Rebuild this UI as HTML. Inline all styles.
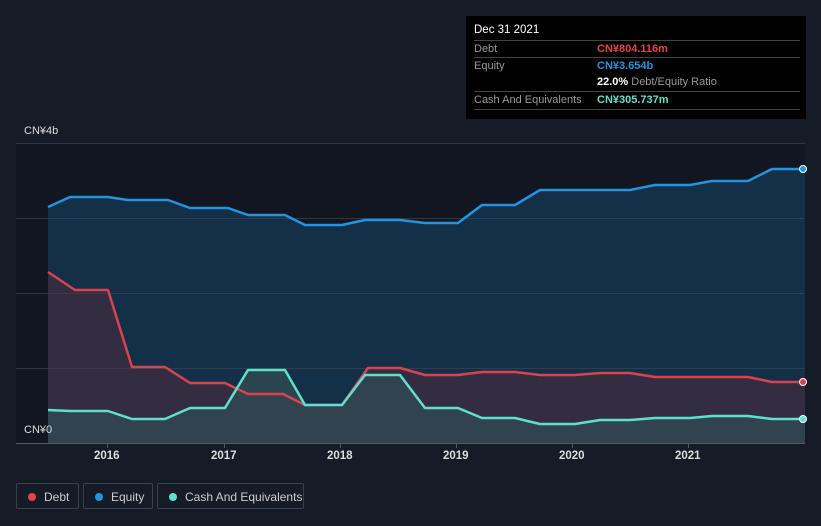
<!DOCTYPE html><html><head><style>
body{margin:0;width:821px;height:526px;background:#161c27;font-family:"Liberation Sans",sans-serif;overflow:hidden;position:relative}
.tt{position:absolute;left:466px;top:16px;width:340px;height:103px;background:#000;color:#ccc;font-size:11px}
.tt .r{position:absolute;left:8px;width:326px;border-top:1px solid #444;height:17px;line-height:17px;color:#999}
.tt b{position:absolute;left:123px;font-weight:bold}
.leg{position:absolute;top:483px;height:26px;border:1px solid #3a4049;border-radius:2px;color:#ccc;font-size:12px;line-height:26px;box-sizing:border-box}
.leg i{position:absolute;left:11px;top:9px;width:8px;height:8px;border-radius:50%}
.leg span{position:absolute;left:27px}
.ax{position:absolute;color:#ddd;font-size:11px}
.yr{position:absolute;color:#ddd;font-size:11.5px;font-weight:bold}
</style></head><body>
<svg width="821" height="526" style="position:absolute;left:0;top:0">
<rect x="16" y="143" width="789" height="300" fill="#111620"/>
<polygon fill="#143049" points="48,207 70,197 108,197 128,200 168,200 190,208 228,208 248,215 285,215 305,225 342,225 365,220 400,220 425,223 458,223 482,205 515,205 540,190 630,190 655,185 690,185 712,181 748,181 772,169 805,169 805,443 48,443"/>
<polygon fill="#3a2b3e" opacity="0.85" points="48,272 75,290 108,290 132,367 165,367 190,383 225,383 248,394 283,394 305,405 342,405 368,368 400,368 425,375 458,375 482,372 515,372 540,375 575,375 600,373 630,373 655,377 748,377 772,382 805,382 805,443 48,443"/>
<polygon fill="#2f4a52" opacity="0.8" points="48,410 70,411 108,411 132,419 165,419 190,408 225,408 248,370 285,370 305,405 342,405 365,375 400,375 425,408 458,408 482,418 515,418 540,424 575,424 600,420 630,420 655,418 690,418 712,416 748,416 772,419 805,419 805,443 48,443"/>
<g stroke="#3a4450" stroke-width="1" opacity="0.7"><line x1="16" y1="143.5" x2="805" y2="143.5"/><line x1="16" y1="218.5" x2="805" y2="218.5"/><line x1="16" y1="293.5" x2="805" y2="293.5"/><line x1="16" y1="368.5" x2="805" y2="368.5"/></g>
<g fill="none" stroke-width="2.5" stroke-linejoin="round">
<polyline stroke="#2394e0" points="48,207 70,197 108,197 128,200 168,200 190,208 228,208 248,215 285,215 305,225 342,225 365,220 400,220 425,223 458,223 482,205 515,205 540,190 630,190 655,185 690,185 712,181 748,181 772,169 805,169"/>
<polyline stroke="#d9434f" points="48,272 75,290 108,290 132,367 165,367 190,383 225,383 248,394 283,394 305,405 342,405 368,368 400,368 425,375 458,375 482,372 515,372 540,375 575,375 600,373 630,373 655,377 748,377 772,382 805,382"/>
<polyline stroke="#5fe0cc" points="48,410 70,411 108,411 132,419 165,419 190,408 225,408 248,370 285,370 305,405 342,405 365,375 400,375 425,408 458,408 482,418 515,418 540,424 575,424 600,420 630,420 655,418 690,418 712,416 748,416 772,419 805,419"/>
</g>
<circle cx="803" cy="169" r="3.5" fill="#2394e0" stroke="#fff" stroke-width="1"/>
<circle cx="803" cy="382" r="3.5" fill="#d9434f" stroke="#fff" stroke-width="1"/>
<circle cx="803" cy="419" r="3.5" fill="#5fe0cc" stroke="#fff" stroke-width="1"/>
<line x1="16" y1="443.5" x2="805" y2="443.5" stroke="#555a62"/>
<g stroke="#555a62"><line x1="107.5" y1="443" x2="107.5" y2="448"/><line x1="224.5" y1="443" x2="224.5" y2="448"/><line x1="340.5" y1="443" x2="340.5" y2="448"/><line x1="456.5" y1="443" x2="456.5" y2="448"/><line x1="572.5" y1="443" x2="572.5" y2="448"/><line x1="688.5" y1="443" x2="688.5" y2="448"/></g>
</svg>
<div class="ax" style="left:24px;top:125px">CN¥4b</div>
<div class="ax" style="left:24px;top:424px">CN¥0</div>
<div class="yr" style="left:94px;top:450px">2016</div>
<div class="yr" style="left:211px;top:450px">2017</div>
<div class="yr" style="left:327px;top:450px">2018</div>
<div class="yr" style="left:443px;top:450px">2019</div>
<div class="yr" style="left:559px;top:450px">2020</div>
<div class="yr" style="left:675px;top:450px">2021</div>
<div class="tt">
<div style="position:absolute;left:8px;top:8px;color:#fff;font-size:11.5px">Dec 31 2021</div>
<div class="r" style="top:24px">Debt<b style="color:#e5434a">CN¥804.116m</b></div>
<div class="r" style="top:41px">Equity<b style="color:#2394e0">CN¥3.654b</b></div>
<div class="r" style="top:58px;border-top:none"><b style="color:#fff">22.0% <span style="color:#999;font-weight:normal">Debt/Equity Ratio</span></b></div>
<div class="r" style="top:75px">Cash And Equivalents<b style="color:#5fe0cc">CN¥305.737m</b></div>
<div class="r" style="top:93px;height:0"></div>
</div>
<div class="leg" style="left:16px;width:63px"><i style="background:#e5434a"></i><span>Debt</span></div>
<div class="leg" style="left:83px;width:70px"><i style="background:#2394e0"></i><span>Equity</span></div>
<div class="leg" style="left:157px;width:147px"><i style="background:#5fe0cc"></i><span>Cash And Equivalents</span></div>
</body></html>
